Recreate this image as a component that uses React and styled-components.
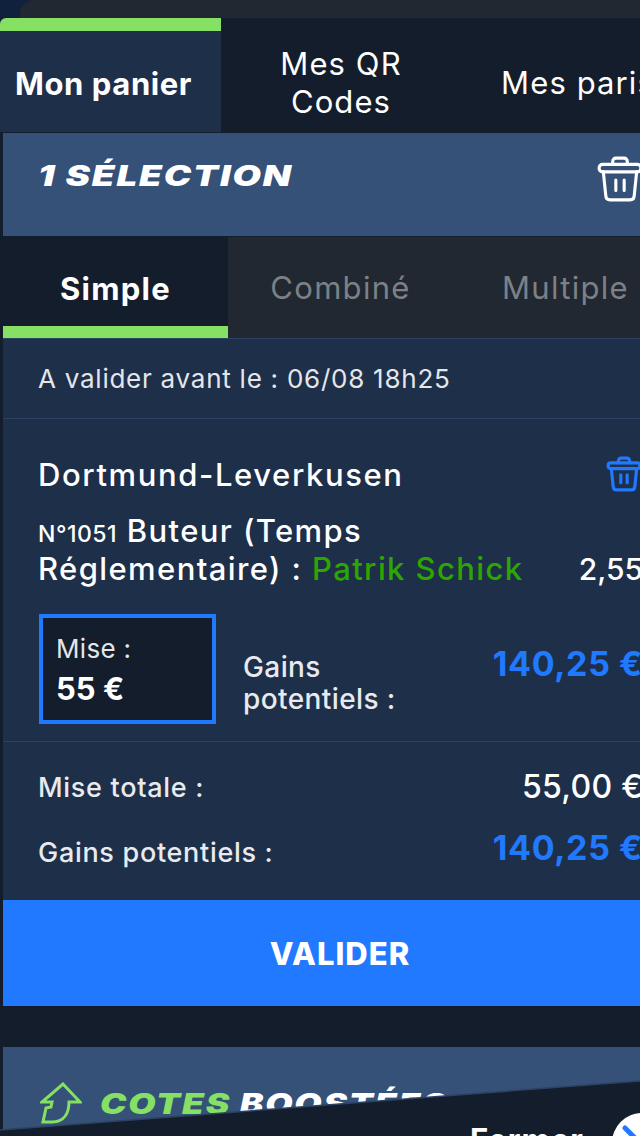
import styled, { createGlobalStyle } from 'styled-components';

const GlobalStyle = createGlobalStyle`
  html, body {
    margin: 0;
    padding: 0;
    background: #141d2b;
  }
  * {
    box-sizing: border-box;
  }
`;

const sans = `Inter, "Noto Sans", "Liberation Sans", sans-serif`;

function TrashIcon({ size, color, weight }) {
  return (
    <svg width={size} height={size} viewBox="0 0 24 24" fill="none" stroke={color} strokeWidth={weight} strokeLinecap="round" strokeLinejoin="round">
      <path d="M8.5 5V3.6C8.5 2.7 9.2 2 10 2h4c.8 0 1.5.7 1.5 1.6V5" />
      <rect x="2" y="5" width="20" height="3.6" rx="1.6" />
      <path d="M4 8.6l1.2 11.6c.1 1.1 1 1.8 2 1.8h9.6c1 0 1.9-.7 2-1.8L20 8.6" />
      <path d="M10 12.5v5M14 12.5v5" />
    </svg>
  );
}

function BoostIcon() {
  return (
    <svg width="42" height="44" viewBox="0 0 42 44" fill="none" stroke="#86e063" strokeWidth="3" strokeLinejoin="miter">
      <path d="M23 2L40 20H29C29 30 25 40 12 40H3L6 26L11 25L12 20H2Z" />
    </svg>
  );
}

export default function App() {
  return (
    <Page>
      <GlobalStyle />
      <TopBar><TopStrip /></TopBar>
      <MainTabs>
        <MainTab $active $width={221}>Mon panier</MainTab>
        <MainTab $width={240}>Mes QR<br />Codes</MainTab>
        <MainTab $width={234}>Mes paris</MainTab>
      </MainTabs>
      <Panel>
        <SelectionHeader>
          <SelectionTitle>1 SÉLECTION</SelectionTitle>
          <HeaderTrash><TrashIcon size={50} color="#fff" weight={1.5} /></HeaderTrash>
        </SelectionHeader>
        <BetTabs>
          <BetTab $active>Simple</BetTab>
          <BetTab>Combiné</BetTab>
          <BetTab>Multiple</BetTab>
        </BetTabs>
        <Deadline>A valider avant le : 06/08 18h25</Deadline>
        <BetCard>
          <EventRow>
            <EventName>Dortmund-Leverkusen</EventName>
            <TrashIcon size={38} color="#2079ff" weight={2} />
          </EventRow>
          <MarketRow>
            <Market><small>N°1051</small> Buteur (Temps Réglementaire) : <Pick>Patrik Schick</Pick></Market>
            <Odds>2,55</Odds>
          </MarketRow>
          <StakeRow>
            <StakeBox>
              <StakeLabel>Mise :</StakeLabel>
              <StakeValue>55 €</StakeValue>
            </StakeBox>
            <GainLabel>Gains<br />potentiels :</GainLabel>
            <Amount $lift={10}>140,25 €</Amount>
          </StakeRow>
        </BetCard>
        <Totals>
          <TotalRow>
            <TotalLabel $drop={2}>Mise totale :</TotalLabel>
            <TotalValue>55,00 €</TotalValue>
          </TotalRow>
          <TotalRow>
            <TotalLabel $drop={9}>Gains potentiels :</TotalLabel>
            <Amount>140,25 €</Amount>
          </TotalRow>
        </Totals>
        <ValidateButton>VALIDER</ValidateButton>
        <BoostHeader>
          <BoostIcon />
          <BoostTitle><em>COTES</em> BOOSTÉES</BoostTitle>
        </BoostHeader>
      </Panel>
      <BottomSheet viewBox="0 0 640 56" preserveAspectRatio="none">
        <polygon points="0,50 640,1 640,56 0,56" fill="#141d2b" />
        <polyline points="0,50 640,1" stroke="#2c4263" strokeWidth="1.5" fill="none" />
      </BottomSheet>
      <CloseRow>
        <CloseLabel>Fermer</CloseLabel>
        <CloseCircle>
          <svg width="40" height="40" viewBox="0 0 40 40" fill="none" stroke="#2079ff" strokeWidth="5" strokeLinecap="round">
            <path d="M3 5l17 17L37 5" />
          </svg>
        </CloseCircle>
      </CloseRow>
    </Page>
  );
}

const Page = styled.div`
  position: relative;
  width: 640px;
  height: 1136px;
  overflow: hidden;
  background: #141d2b;
  color: #fff;
  font-family: ${sans};
`;

const TopBar = styled.div`
  height: 18px;
  padding-left: 20px;
  background: #10213d;
`;

const TopStrip = styled.div`
  height: 18px;
  background: #212831;
  border-top-left-radius: 14px;
`;

const MainTabs = styled.div`
  display: flex;
  width: 760px;
  height: 114px;
`;

const MainTab = styled.div`
  flex: none;
  display: flex;
  align-items: center;
  justify-content: center;
  width: ${(p) => p.$width}px;
  padding: ${(p) => (p.$active ? '4px 14px 0 0' : '16px 0 0')};
  border-top: ${(p) => (p.$active ? '13px solid #86e063' : 'none')};
  border-top-left-radius: ${(p) => (p.$active ? '6px' : '0')};
  background: ${(p) => (p.$active ? '#1e2f4a' : '#141d2b')};
  font-size: 31px;
  font-weight: ${(p) => (p.$active ? 700 : 400)};
  letter-spacing: ${(p) => (p.$active ? '0.6px' : '1.1px')};
  line-height: 38px;
  text-align: center;
  white-space: nowrap;
`;

const Panel = styled.div`
  margin: 1px 0 0 3px;
  width: 674px;
  display: flex;
  flex-direction: column;
`;

const SelectionHeader = styled.div`
  display: flex;
  align-items: flex-start;
  justify-content: space-between;
  height: 103px;
  padding: 24px 32px 0 35px;
  background: #355178;
`;

const SelectionTitle = styled.div`
  font-size: 28px;
  font-weight: 900;
  font-style: italic;
  letter-spacing: 1.4px;
  line-height: 38px;
  transform: scaleX(1.31);
  transform-origin: left center;
`;

const HeaderTrash = styled.div`
  margin-top: -3px;
  height: 50px;
`;

const BetTabs = styled.div`
  display: flex;
  height: 102px;
  margin-top: 1px;
  border-bottom: 1px solid #2c4263;
  background: #212831;
`;

const BetTab = styled.div`
  flex: none;
  display: flex;
  align-items: center;
  justify-content: center;
  width: 225px;
  padding-top: ${(p) => (p.$active ? 14 : 0)}px;
  border-bottom: ${(p) => (p.$active ? '12px solid #86e063' : 'none')};
  background: ${(p) => (p.$active ? '#141d2b' : 'transparent')};
  color: ${(p) => (p.$active ? '#fff' : '#7c8187')};
  font-size: 31px;
  font-weight: ${(p) => (p.$active ? 700 : 400)};
  letter-spacing: 1.3px;
`;

const Deadline = styled.div`
  display: flex;
  align-items: center;
  height: 80px;
  padding-left: 35px;
  border-bottom: 1px solid #2c4263;
  background: #1e2f4a;
  color: #e4e6ea;
  font-size: 26px;
  letter-spacing: 0.75px;
`;

const BetCard = styled.div`
  height: 323px;
  padding: 32px 34px 0 35px;
  border-bottom: 1px solid #2c4263;
  background: #1e2f4a;
`;

const EventRow = styled.div`
  display: flex;
  align-items: center;
  justify-content: space-between;
  height: 46px;
`;

const EventName = styled.div`
  font-size: 31px;
  font-weight: 500;
  letter-spacing: 1.6px;
`;

const MarketRow = styled.div`
  display: flex;
  align-items: flex-end;
  justify-content: space-between;
  margin-top: 15px;
`;

const Market = styled.div`
  width: 530px;
  font-size: 31px;
  font-weight: 500;
  letter-spacing: 1.4px;
  line-height: 38px;

  small {
    font-size: 23px;
    letter-spacing: 0.5px;
    line-height: 1;
  }
`;

const Pick = styled.span`
  color: #2ea600;
`;

const Odds = styled.div`
  font-size: 30px;
  font-weight: 500;
  line-height: 38px;
`;

const StakeRow = styled.div`
  display: flex;
  align-items: flex-start;
  margin-top: 26px;
`;

const StakeBox = styled.div`
  flex: none;
  width: 177px;
  height: 110px;
  margin-left: 1px;
  padding: 14px 13px;
  border: 4px solid #2079ff;
  background: #141d2b;
`;

const StakeLabel = styled.div`
  color: #e4e6ea;
  font-size: 26px;
  letter-spacing: 0.3px;
  line-height: 34px;
`;

const StakeValue = styled.div`
  margin-top: 6px;
  font-size: 31px;
  font-weight: 700;
  line-height: 34px;
`;

const GainLabel = styled.div`
  flex: none;
  width: 220px;
  margin: 37px 0 0 27px;
  color: #e8eaee;
  font-size: 28px;
  font-weight: 500;
  letter-spacing: 0.4px;
  line-height: 32px;
`;

const Amount = styled.div`
  margin-left: auto;
  margin-bottom: ${(p) => p.$lift || 0}px;
  color: #2079ff;
  font-size: 34px;
  font-weight: 700;
  letter-spacing: 0.6px;
  white-space: nowrap;
  line-height: 40px;
  align-self: center;
`;

const Totals = styled.div`
  display: flex;
  flex-direction: column;
  gap: 22px;
  height: 158px;
  padding: 24px 34px 0 35px;
  background: #1e2f4a;
`;

const TotalRow = styled.div`
  display: flex;
  align-items: center;
  justify-content: space-between;
  height: 40px;
`;

const TotalLabel = styled.div`
  padding-top: ${(p) => p.$drop || 0}px;
  color: #e8eaee;
  font-size: 27px;
  font-weight: 500;
  letter-spacing: 0.7px;
`;

const TotalValue = styled.div`
  font-size: 32px;
  font-weight: 500;
  letter-spacing: 0.3px;
  white-space: nowrap;
`;

const ValidateButton = styled.button`
  height: 106px;
  border: none;
  background: #2079ff;
  color: #fff;
  font-family: ${sans};
  font-size: 31px;
  font-weight: 800;
  letter-spacing: 1px;
  cursor: pointer;
`;

const BoostHeader = styled.div`
  display: flex;
  align-items: center;
  gap: 18px;
  height: 103px;
  margin-top: 41px;
  padding: 10px 0 0 37px;
  background: #355178;
`;

const BoostTitle = styled.div`
  font-size: 28px;
  font-weight: 900;
  font-style: italic;
  letter-spacing: 1.4px;
  transform: scaleX(1.26);
  transform-origin: left center;

  em {
    color: #86e063;
  }
`;

const BottomSheet = styled.svg`
  position: absolute;
  left: 0;
  bottom: 0;
  width: 640px;
  height: 56px;
`;

const CloseRow = styled.div`
  position: absolute;
  right: -32px;
  bottom: -37px;
  display: flex;
  align-items: center;
  gap: 28px;
`;

const CloseLabel = styled.div`
  margin-bottom: 8px;
  font-size: 31px;
  font-weight: 700;
  letter-spacing: 1px;
`;

const CloseCircle = styled.div`
  display: flex;
  align-items: center;
  justify-content: center;
  width: 60px;
  height: 60px;
  border-radius: 50%;
  background: #fff;
`;
